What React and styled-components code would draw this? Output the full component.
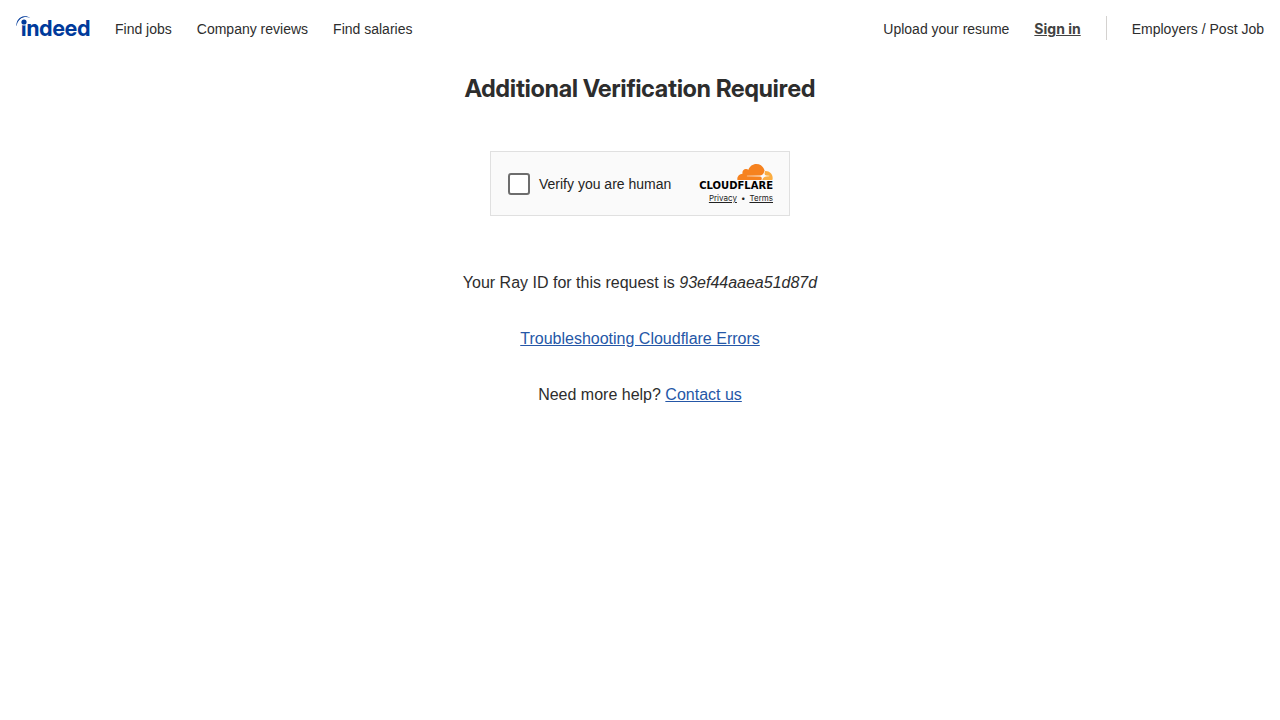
import React from "react";
import styled, { createGlobalStyle } from "styled-components";

const GlobalStyle = createGlobalStyle`
  * { box-sizing: border-box; }
  body {
    margin: 0;
    background: #ffffff;
    color: #2d2d2d;
    font-family: "Liberation Sans", Arial, sans-serif;
    font-size: 16px;
    line-height: 24px;
  }
`;

const Header = styled.header`
  display: flex;
  justify-content: space-between;
  align-items: center;
  padding: 16px;
`;

const Nav = styled.nav`
  display: flex;
  align-items: center;
  gap: 25px;
  height: 24px;
`;

const NavLink = styled.a`
  padding-top: 2px;
  font-size: 14px;
  white-space: nowrap;
  color: #2d2d2d;
  text-decoration: none;
`;

const SignInLink = styled(NavLink)`
  color: #424242;
  font-family: Inter, sans-serif;
  font-weight: 700;
  text-decoration: underline;
`;

const LogoLink = styled.a`
  display: flex;
`;

const Divider = styled.span`
  width: 1px;
  height: 24px;
  background: #d4d2d0;
`;

const Main = styled.main`
  display: flex;
  flex-direction: column;
  align-items: center;
  padding: 16px;
  text-align: center;
`;

const Title = styled.h1`
  margin: 0 0 46px;
  font-family: "Inter Display", Inter, sans-serif;
  font-size: 24px;
  line-height: 33px;
  font-weight: 700;
`;

const Widget = styled.section`
  display: flex;
  align-items: center;
  justify-content: space-between;
  width: 300px;
  height: 65px;
  margin-bottom: 55px;
  padding: 0 16px;
  border: 1px solid #e0e0e0;
  background: #fafafa;
`;

const CheckLabel = styled.label`
  display: flex;
  align-items: center;
  gap: 8px;
  color: #232323;
  font-size: 14px;
  line-height: 20px;
`;

const CheckBox = styled.input`
  appearance: none;
  width: 22px;
  height: 22px;
  margin: 1px;
  border: 2px solid #6d6d6d;
  border-radius: 3px;
  background: #ffffff;
`;

const Brand = styled.div`
  display: flex;
  flex-direction: column;
  align-items: flex-end;
  gap: 1px;
`;

const Legal = styled.div`
  display: flex;
  gap: 4px;
  color: #232323;
  font-family: Inter, sans-serif;
  font-size: 8px;
  line-height: 12px;
`;

const LegalLink = styled.a`
  color: inherit;
`;

const Paragraph = styled.p`
  margin: 0 0 32px;
`;

const TextLink = styled.a`
  color: #2557a7;
  text-decoration: underline;
`;

const LogoSvg = styled.svg`
  display: block;
  overflow: visible;
`;

function IndeedLogo() {
  return (
    <LogoSvg width="74" height="24" viewBox="0 0 74 24" role="img" aria-label="Indeed">
      <text x="5" y="20" fill="#003a9b" fontFamily="Inter Display, Inter, sans-serif" fontSize="22" fontWeight="700">indeed</text>
      <circle cx="8" cy="6" r="3.6" fill="#ffffff" />
      <circle cx="8" cy="6" r="2.6" fill="#003a9b" />
      <path d="M.3 9.8C.3 4.7 3.600.6 8.200.300c2.400-.2 4.300.4 6 1.800-2.100-1-4.200-1.300-6.300-.8C4.100 2.200 1.300 5.600.7 9.800Z" fill="#003a9b" />
    </LogoSvg>
  );
}

function CloudflareLogo() {
  return (
    <LogoSvg width="74" height="28" viewBox="0 0 74 28" role="img" aria-label="Cloudflare">
      <svg x="38" y="1" width="36" height="16" viewBox="0 6.57 24 10.86">
        <path fill="#f6821f" d="M16.5088 16.8447c.1475-.5068.0908-.9707-.1553-1.3154-.2246-.3164-.6045-.499-1.0615-.5205l-8.6592-.1123a.1559.1559 0 0 1-.1333-.0713c-.0283-.042-.0351-.0986-.021-.1553.0278-.084.1123-.1484.2036-.1562l8.7359-.1123c1.0351-.0489 2.1601-.8868 2.5537-1.9136l.499-1.3013c.0215-.0561.0293-.1128.0147-.168-.5625-2.5463-2.835-4.4453-5.5499-4.4453-2.5039 0-4.6284 1.6177-5.3876 3.8614-.4927-.3658-1.1187-.5625-1.794-.499-1.2026.119-2.1665 1.083-2.2861 2.2856-.0283.31-.0069.6128.0635.894C1.5683 13.171 0 14.7754 0 16.752c0 .1748.0142.3515.0352.5273.0141.083.0844.1475.1689.1475h15.9814c.0909 0 .1758-.0645.2032-.1553l.12-.4268z" />
        <path fill="#fbad41" d="M19.2656 11.2813c-.0771 0-.1611 0-.2383.0112-.0566 0-.1054.0415-.127.0976l-.3378 1.1744c-.1475.5068-.0918.9707.1543 1.3164.2256.3164.6055.498 1.0625.5195l1.8437.1133c.0557 0 .1055.0263.1329.0703.0283.043.0351.1074.0214.1562-.0283.084-.1132.1485-.204.1553l-1.921.1123c-1.041.0488-2.1582.8867-2.5527 1.914l-.1406.3585c-.0283.0713.0215.1416.0986.1416h6.5977c.0771 0 .1474-.0489.169-.126.1122-.4082.1757-.837.1757-1.2803 0-2.6025-2.125-4.727-4.7344-4.727" />
      </svg>
      <text x="74" y="26" textAnchor="end" fill="#000000" fontFamily="DejaVu Sans, sans-serif" fontSize="10" fontWeight="700">CLOUDFLARE</text>
    </LogoSvg>
  );
}

export default function App() {
  return (
    <>
      <GlobalStyle />
      <Header>
        <Nav aria-label="Main">
          <LogoLink href="#home"><IndeedLogo /></LogoLink>
          <NavLink href="#jobs">Find jobs</NavLink>
          <NavLink href="#reviews">Company reviews</NavLink>
          <NavLink href="#salaries">Find salaries</NavLink>
        </Nav>
        <Nav aria-label="Account">
          <NavLink href="#resume">Upload your resume</NavLink>
          <SignInLink href="#signin">Sign in</SignInLink>
          <Divider />
          <NavLink href="#employers">Employers / Post Job</NavLink>
        </Nav>
      </Header>
      <Main>
        <Title>Additional Verification Required</Title>
        <Widget>
          <CheckLabel htmlFor="human">
            <CheckBox id="human" type="checkbox" />
            Verify you are human
          </CheckLabel>
          <Brand>
            <CloudflareLogo />
            <Legal>
              <LegalLink href="#privacy">Privacy</LegalLink>
              <span>•</span>
              <LegalLink href="#terms">Terms</LegalLink>
            </Legal>
          </Brand>
        </Widget>
        <Paragraph>Your Ray ID for this request is <em>93ef44aaea51d87d</em></Paragraph>
        <Paragraph><TextLink href="#troubleshooting">Troubleshooting Cloudflare Errors</TextLink></Paragraph>
        <Paragraph>Need more help? <TextLink href="#contact">Contact us</TextLink></Paragraph>
      </Main>
    </>
  );
}
